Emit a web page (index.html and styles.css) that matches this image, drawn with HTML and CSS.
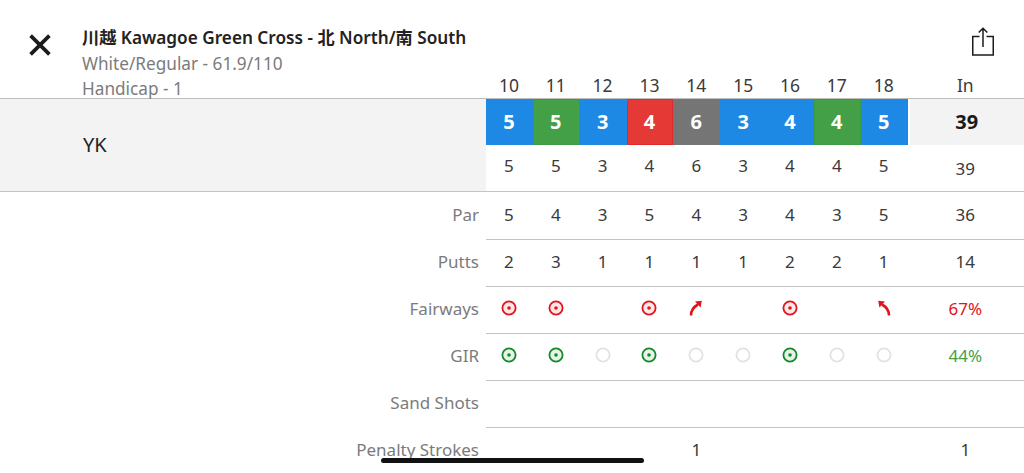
FILE: index.html
```html
<!DOCTYPE html>
<html lang="en">
<head>
<meta charset="utf-8">
<title>Scorecard</title>
<link rel="stylesheet" href="styles.css">
</head>
<body>
<svg class="defs" width="0" height="0" aria-hidden="true">
  <symbol id="hit" viewBox="0 0 16 16">
    <circle cx="8" cy="8" r="6.6" fill="currentColor" fill-opacity=".1" stroke="currentColor" stroke-width="1.8"/>
    <circle cx="8" cy="8" r="1.8" fill="currentColor"/>
  </symbol>
  <symbol id="miss" viewBox="0 0 16 16">
    <circle cx="8" cy="8" r="6.6" fill="none" stroke="#e2e2e2" stroke-width="1.8"/>
  </symbol>
  <symbol id="right" viewBox="0 0 16 16">
    <path d="M3 15.5C3 11 5.5 7 10 4.5" fill="none" stroke="currentColor" stroke-width="2.6"/>
    <path d="M7 1.5L13.8 .8L12.6 7.6Z" fill="currentColor"/>
  </symbol>
</svg>
<main class="card">
  <header class="head grid">
    <div class="info">
      <button class="close" aria-label="Close">
        <svg width="24" height="24" viewBox="0 0 24 24"><path d="M2.6 2.6L21.4 21.4M21.4 2.6L2.6 21.4" stroke="#1c1c1c" stroke-width="3.7" fill="none"/></svg>
      </button>
      <div class="titles">
        <h1>川越 Kawagoe Green Cross - 北 North/南 South</h1>
        <p>White/Regular - 61.9/110</p>
        <p>Handicap - 1</p>
      </div>
    </div>
    <div class="share">
      <svg width="22" height="29" viewBox="0 0 22 29"><path d="M7.5 9.5H.75V28H21.25V9.5H14.500M11 20V1.200M6.700 5.500L11 1.200L15.300 5.500" fill="none" stroke="#1c1c1c" stroke-width="1.5"/></svg>
    </div>
    <span class="hole">10</span><span class="hole">11</span><span class="hole">12</span><span class="hole">13</span><span class="hole">14</span><span class="hole">15</span><span class="hole">16</span><span class="hole">17</span><span class="hole">18</span><span class="hole">In</span>
  </header>

  <section class="player grid">
    <div class="name">YK</div>
    <b class="sc blue">5</b><b class="sc green">5</b><b class="sc blue">3</b><b class="sc red">4</b><b class="sc gray">6</b><b class="sc blue">3</b><b class="sc blue">4</b><b class="sc green">4</b><b class="sc blue">5</b>
    <b class="total">39</b>
    <span class="net">5</span><span class="net">5</span><span class="net">3</span><span class="net">4</span><span class="net">6</span><span class="net">3</span><span class="net">4</span><span class="net">4</span><span class="net">5</span>
    <span class="net last">39</span>
  </section>

  <div class="row grid"><span class="label">Par</span><span>5</span><span>4</span><span>3</span><span>5</span><span>4</span><span>3</span><span>4</span><span>3</span><span>5</span><span>36</span></div>
  <div class="row grid"><span class="label">Putts</span><span>2</span><span>3</span><span>1</span><span>1</span><span>1</span><span>1</span><span>2</span><span>2</span><span>1</span><span>14</span></div>
  <div class="row grid fw">
    <span class="label">Fairways</span>
    <span><svg class="ic"><use href="#hit"/></svg></span>
    <span><svg class="ic"><use href="#hit"/></svg></span>
    <span></span>
    <span><svg class="ic"><use href="#hit"/></svg></span>
    <span><svg class="ic"><use href="#right"/></svg></span>
    <span></span>
    <span><svg class="ic"><use href="#hit"/></svg></span>
    <span></span>
    <span><svg class="ic flip"><use href="#right"/></svg></span>
    <span class="pct">67%</span>
  </div>
  <div class="row grid gir">
    <span class="label">GIR</span>
    <span><svg class="ic"><use href="#hit"/></svg></span>
    <span><svg class="ic"><use href="#hit"/></svg></span>
    <span><svg class="ic"><use href="#miss"/></svg></span>
    <span><svg class="ic"><use href="#hit"/></svg></span>
    <span><svg class="ic"><use href="#miss"/></svg></span>
    <span><svg class="ic"><use href="#miss"/></svg></span>
    <span><svg class="ic"><use href="#hit"/></svg></span>
    <span><svg class="ic"><use href="#miss"/></svg></span>
    <span><svg class="ic"><use href="#miss"/></svg></span>
    <span class="pct">44%</span>
  </div>
  <div class="row grid"><span class="label">Sand Shots</span><span></span><span></span><span></span><span></span><span></span><span></span><span></span><span></span><span></span><span></span></div>
  <div class="row grid"><span class="label">Penalty Strokes</span><span></span><span></span><span></span><span></span><span>1</span><span></span><span></span><span></span><span></span><span>1</span></div>
</main>
<div class="home"></div>
</body>
</html>
```

FILE: styles.css
```css
* { box-sizing: border-box; }
html, body { margin: 0; height: 473px; overflow: hidden; background: #fff; }
body { font-family: "Noto Sans", "Noto Sans CJK JP", sans-serif; color: #222; position: relative; }
.defs { position: absolute; }
.grid { display: grid; grid-template-columns: 486px repeat(9, 46.85px) 1fr; }

.head { height: 99px; border-bottom: 1px solid #bdbdbd; grid-template-rows: 74px 24px; }
.info { grid-column: 1; grid-row: 1 / 3; display: flex; min-width: 0; }
.close { width: 82px; height: 60px; flex: none; padding: 30px 0 0 28px; border: 0; background: none; text-align: left; }
.close svg { display: block; }
.titles { padding-top: 27px; white-space: nowrap; }
.titles h1 { margin: 0; font-size: 17.2px; line-height: 22px; font-weight: 600; color: #222; }
.titles p { margin: 4px 0 0; font-size: 17.2px; line-height: 21px; color: #7b7b7b; }
.share { grid-column: 2 / -1; grid-row: 1; display: flex; justify-content: flex-end; align-items: flex-start; padding: 27px 30px 0 0; }
.hole { grid-row: 2; padding-right: 1px; text-align: center; font-size: 17.5px; line-height: 22px; color: #3a3a3a; }

.player { height: 93px; border-bottom: 1px solid #c4c4c4; grid-template-rows: 46px 46px; }
.name { grid-column: 1; grid-row: 1 / 3; padding: 30px 0 0 83px; background: #f3f3f3; font-size: 20px; line-height: 32px; color: #222; }
.sc { grid-row: 1; padding-right: 1px; border: 1px solid; color: #fff; font-size: 20px; line-height: 44px; text-align: center; font-weight: 700; }
.blue { background: #1e88e5; border-color: #1e88e5; }
.green { background: #43a047; border-color: #3c9a40; }
.red { background: #e53935; border-color: #e02a2c; }
.gray { background: #757575; border-color: #757575; }
.total { grid-row: 1; margin-left: 2px; background: #f3f3f3; text-align: center; font-size: 20px; line-height: 46px; color: #1a1a1a; }
.net { grid-row: 2; padding-right: 1px; text-align: center; font-size: 17px; line-height: 42px; color: #3a3a3a; }
.net.last { line-height: 48px; }

.row { height: 47px; position: relative; align-items: start; font-size: 17px; color: #3a3a3a; text-align: center; }
.row::after { content: ""; position: absolute; left: 486px; right: 0; bottom: -1px; height: 1px; background: #c4c4c4; }
.row > span { height: 44px; padding-right: 1px; display: flex; align-items: center; justify-content: center; }
.row > .label { justify-content: flex-end; padding-right: 7px; color: #7b7b7b; }
.ic { width: 16px; height: 16px; display: block; }
.fw .ic, .fw .pct { color: #e0141c; }
.gir .ic { color: #118a2a; }
.gir .pct { color: #43a047; }
.ic.flip { transform: scaleX(-1); }

.home { position: absolute; left: 381px; top: 458px; width: 263px; height: 5px; border-radius: 3px; background: #111; }
```
